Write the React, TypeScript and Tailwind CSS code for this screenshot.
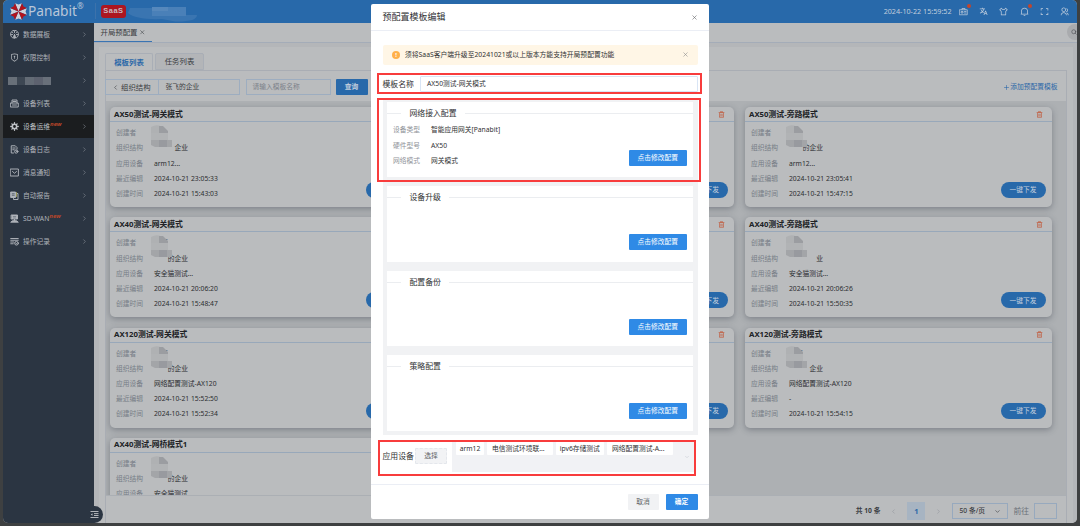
import React from "react";
import {
  RiTranslate2,
  RiTShirtLine,
  RiNotification2Line,
  RiFullscreenLine,
  RiGroupLine,
  RiShieldKeyholeLine,
  RiDeleteBin6Line,
} from "react-icons/ri";
import { ChevronRight, ChevronLeft, ChevronDown, X, Search, Plus } from "lucide-react";

type IconProps = { className?: string };

function Logo() {
  const wedge = "M0 0 L-3.7 -9.2 L0 -7.8 L3.7 -9.2 Z";
  return (
    <svg viewBox="-9.4 -9.4 18.8 18.8" className="size-[17px] shrink-0">
      {[0, 90, 180, 270].map((a) => (
        <path key={a} d={wedge} fill="#d0d2d8" transform={`rotate(${a})`} />
      ))}
      {[45, 135, 225, 315].map((a) => (
        <path key={a} d={wedge} fill="#b3141c" transform={`rotate(${a})`} />
      ))}
    </svg>
  );
}

function Glyph({ className, children }: IconProps & { children: React.ReactNode }) {
  return (
    <svg
      viewBox="0 0 18 18"
      className={className}
      fill="none"
      stroke="currentColor"
      strokeWidth="1.9"
      strokeLinecap="round"
      strokeLinejoin="round"
    >
      {children}
    </svg>
  );
}

const DashboardIcon = (p: IconProps) => (
  <Glyph {...p}>
    <path d="M5 15.6A8 8 0 1 1 13 15.6" />
    <path d="M9 2v3M3 9h2M13 9h2M5 5l1 1M13 5l-1 1M9 9v7M7 13l2-4 2 4v3H7z" />
  </Glyph>
);
const DevicesIcon = (p: IconProps) => (
  <Glyph {...p}>
    <path d="M4 8V2h10v6M1.500 8h15v8h-15zM6 5h6M5 12h8" />
  </Glyph>
);
const GearIcon = (p: IconProps) => (
  <Glyph {...p}>
    <circle cx="9" cy="9" r="4.300" strokeWidth="3" />
    <path
      strokeWidth="2.600"
      d="M9 1.500v2M9 14.500v2M1.500 9h2M14.500 9h2M3.700 3.700l1.400 1.400M12.900 12.900l1.400 1.400M3.700 14.300l1.400-1.400M12.900 5.100l1.400-1.400"
    />
  </Glyph>
);
const LogIcon = (p: IconProps) => (
  <Glyph {...p}>
    <path d="M7 16H2.500V1.500h8L14 5v3M5.500 6h5M5.500 9.500h3" />
    <circle cx="12.500" cy="13" r="3.300" />
    <path d="M12.500 11.500V13h1.500" />
  </Glyph>
);
const MailIcon = (p: IconProps) => (
  <Glyph {...p}>
    <path d="M1.200 2h15.600v14H1.200zM5 7l4 3.500L13 7" />
  </Glyph>
);
const ReportIcon = (p: IconProps) => (
  <Glyph {...p}>
    <path d="M2 2h9v11H2z" fill="currentColor" />
    <path d="M14 5h2v12H7v-2" />
    <path d="M4.500 5.500h4M4.500 8.500h4" stroke="#59636f" />
    <path d="M13 3v8" stroke="#9c9a5a" />
  </Glyph>
);
const WanIcon = (p: IconProps) => (
  <Glyph {...p}>
    <path d="M3 2h12v8H3zM9 10v3" fill="currentColor" />
    <path d="M2 16l3-2.500h8l3 2.500z" fill="currentColor" />
    <path d="M6.500 5h5M7 8h4" stroke="#59636f" strokeWidth="1.200" />
  </Glyph>
);
const RecordIcon = (p: IconProps) => (
  <Glyph {...p}>
    <path d="M1.500 3h15M1.500 6.500h15M1.500 10h6M1.500 13.500h5" />
    <circle cx="13" cy="12.500" r="3.700" />
    <path d="M11.500 12.500l1.200 1 2-2" />
  </Glyph>
);
const BadgeIcon = (p: IconProps) => (
  <Glyph {...p}>
    <path d="M1.500 5.500h15v10h-15zM6 5.500V3h6v2.500M5 9h3v3H5zM11 9h3M11 12h3" strokeWidth="1.500" />
  </Glyph>
);
const FoldIcon = (p: IconProps) => (
  <Glyph {...p}>
    <path d="M1 3h16M8 7.200h9M8 11h9M1 15h16" strokeLinecap="butt" />
    <path d="M5 6.500v5L1.500 9z" fill="currentColor" stroke="none" />
  </Glyph>
);

const menu: { label: string; icon?: React.ComponentType<IconProps>; isNew?: boolean; active?: boolean }[] = [
  { label: "数据展板", icon: DashboardIcon },
  { label: "权限控制", icon: RiShieldKeyholeLine },
  { label: "" },
  { label: "设备列表", icon: DevicesIcon },
  { label: "设备运维", icon: GearIcon, isNew: true, active: true },
  { label: "设备日志", icon: LogIcon },
  { label: "消息通知", icon: MailIcon },
  { label: "自动报告", icon: ReportIcon },
  { label: "SD-WAN", icon: WanIcon, isNew: true },
  { label: "操作记录", icon: RecordIcon },
];

function Sidebar() {
  return (
    <aside className="flex w-[91px] shrink-0 flex-col bg-[#2b3542] pt-[0.500px] text-[#b0b4ba]">
      {menu.map((m, i) => {
        const Icon = m.icon;
        return (
          <div
            key={i}
            className={
              "flex h-[23px] shrink-0 items-center pr-[6.500px] pl-[7px] " +
              (m.active ? "bg-[#1b1d1f] text-[#bfc2c6]" : "")
            }
          >
            {Icon ? (
              <>
                <Icon className="mr-[4px] size-[9px] shrink-0" />
                <span>{m.label}</span>
                {m.isNew && <span className="-mt-[4px] text-[6px] font-bold text-[#b8452a] italic">new</span>}
              </>
            ) : (
              <span className="-ml-[2px] flex h-[8px]">
                <i className="w-[9px] bg-[#687079]" />
                <i className="w-[8px] bg-[#3d4753]" />
                <i className="w-[9px] bg-[#636b75]" />
                <i className="w-[9px] bg-[#5d626f]" />
                <i className="w-[8px] bg-[#69707a]" />
              </span>
            )}
            <ChevronRight className="ml-auto size-[7px] text-[#8b9199]" />
          </div>
        );
      })}
    </aside>
  );
}

function Header() {
  return (
    <header className="flex h-[22.500px] shrink-0 items-center bg-[#2869aa] pl-[7px]">
      <Logo />
      <span className="ml-[1px] text-[13.700px] leading-[20px] text-[#b9c7d9]">Panabit</span>
      <span className="-mt-[11px] text-[8px] text-[#b9c7d9]">®</span>
      <span className="ml-[11px] h-[16px] w-px bg-[#3c72ab]" />
      <span className="ml-[5px] flex h-[13px] w-[25.500px] items-center justify-center rounded-[3px] bg-[#ad1620] font-['Liberation_Sans'] text-[7.500px] font-bold tracking-[0.500px] text-[#c9b9c0]">
        SaaS
      </span>
      <svg viewBox="0 0 70 22" className="mt-[3px] ml-[2px] h-[22px] w-[70px]">
        <path d="M2 6h56v7h11q0 7-22 6.500L34 17Q8 18 0 11z" fill="#3a75b1" />
        <path d="M24 5h34v9H24z" fill="#4a80b8" />
        <path d="M24 5h16v4H24z" fill="#5688bc" />
      </svg>
      <span className="ml-auto text-[7.200px] text-[#c0cddc]">2024-10-22 15:59:52</span>
      <div className="mr-[8px] ml-[7.500px] flex items-center gap-[11.200px] text-[#bccbdc]">
        <span className="relative">
          <BadgeIcon className="size-[9px]" />
          <i className="absolute -top-[3px] -right-[3px] size-[4px] rounded-full bg-[#c2452c]" />
        </span>
        <RiTranslate2 className="size-[9px]" />
        <RiTShirtLine className="size-[9px]" />
        <span className="relative">
          <RiNotification2Line className="size-[9px]" />
          <i className="absolute -top-[3px] -right-[3px] size-[4px] rounded-full bg-[#c2452c]" />
        </span>
        <RiFullscreenLine className="size-[9px]" />
        <RiGroupLine className="size-[9px]" />
      </div>
    </header>
  );
}

type Template = {
  title: string;
  org: string;
  device: string;
  edited?: string;
  created?: string;
  name?: string;
};

const left: Template[] = [
  { title: "AX50测试-网关模式", org: "企业", device: "arm12...", edited: "2024-10-21 23:05:33", created: "2024-10-21 15:43:03" },
  { title: "AX40测试-网关模式", org: "的企业", name: "蓓", device: "安全猫测试...", edited: "2024-10-21 20:06:20", created: "2024-10-21 15:48:47" },
  { title: "AX120测试-网关模式", org: "的企业", name: "蓓", device: "网络配置测试-AX120", edited: "2024-10-21 15:52:50", created: "2024-10-21 15:52:34" },
  { title: "AX40测试-网桥模式1", org: "的企业", device: "安全猫测试" },
];
const middle: (Template | null)[] = [null, null, null];
const right: Template[] = [
  { title: "AX50测试-旁路模式", org: "的企业", device: "arm12...", edited: "2024-10-21 23:05:41", created: "2024-10-21 15:47:15" },
  { title: "AX40测试-旁路模式", org: "业", device: "安全猫测试...", edited: "2024-10-21 20:06:26", created: "2024-10-21 15:50:35" },
  { title: "AX120测试-旁路模式", org: "企业", name: "蓓", device: "网络配置测试-AX120", edited: "-", created: "2024-10-21 15:54:15" },
];

function Row({ label, children }: { label: string; children?: React.ReactNode }) {
  return (
    <div className="flex h-[15.200px] items-center">
      <span className="w-[38px] shrink-0 text-[#767c86]">{label}</span>
      <span className="whitespace-nowrap">{children}</span>
    </div>
  );
}

function Mask() {
  return (
    <svg viewBox="0 0 30 28" className="absolute top-[2px] left-[41px] h-[28px] w-[30px]">
      <path d="M0 3q9-5 17 5v5H0z" fill="#afb1b3" />
      <path d="M8 2h4l5 5v3H8z" fill="#9b9da1" />
      <path d="M0 9h17v7H0z" fill="#b1b3b5" />
      <path d="M0 16h21v7H4L0 21z" fill="#a3a5a8" />
      <path d="M8 16h8v7H8z" fill="#989a9f" />
    </svg>
  );
}

function Card({ t }: { t: Template | null }) {
  return (
    <section className="flex h-[100px] w-[307px] shrink-0 flex-col rounded-[5px] bg-[#babcbe] text-[#2a2c30] shadow-[0_2px_6px_rgba(40,45,60,0.35)]">
      <div className="flex h-[15px] shrink-0 items-center justify-between border-b border-[#98a8ba] pr-[9px] pl-[4.500px]">
        <h3 className="text-[7.800px] font-bold text-[#202225]">{t?.title}</h3>
        <RiDeleteBin6Line className="size-[7px] text-[#c2502f]" />
      </div>
      <div className="relative flex-1 pt-[3.300px] pl-[6.500px]">
        {t && (
          <>
            <Row label="创建者">
              <span className="ml-[7px]">{t.name}</span>
            </Row>
            <Row label="组织结构">
              <span className="flex w-[34px] justify-end">{t.org}</span>
            </Row>
            <Row label="应用设备">{t.device}</Row>
            {t.edited && <Row label="最近编辑">{t.edited}</Row>}
            {t.created && <Row label="创建时间">{t.created}</Row>}
            <Mask />
          </>
        )}
        {(!t || t.created) && (
          <button className="absolute right-[6px] bottom-[9px] h-[16px] w-[45px] rounded-full bg-[#2869aa] text-[#c3cfdd]">
            一键下发
          </button>
        )}
      </div>
    </section>
  );
}

function Column({ items }: { items: (Template | null)[] }) {
  return (
    <div className="flex flex-col gap-[10.250px]">
      {items.map((t, i) => (
        <Card key={i} t={t} />
      ))}
    </div>
  );
}

function Page() {
  return (
    <main className="flex min-w-0 flex-1 flex-col bg-[#b4b6b9] text-[#3a3d42]">
      <div className="flex h-[20.500px] shrink-0 items-stretch justify-between border-b border-[#a4acb8] bg-[#babcbe]">
        <div className="flex w-[57.500px] items-center border-b border-[#3a74b2] pl-[6.500px] text-[7.400px]">
          开局预配置
          <X className="ml-[2px] size-[6.500px]" />
        </div>
        <span className="mt-[1px] -mr-[6px] flex size-[16px] items-center rounded-full bg-[#a9abae] pl-[4px]">
          <Search className="size-[6px]" />
        </span>
      </div>
      <div className="mr-[4.500px] ml-[5px] mt-[4px] flex min-h-0 flex-1 flex-col bg-[#babcbe] pt-[6px] pl-[6px]">
        <div className="flex h-[17px] shrink-0 gap-[2px] text-[7.400px]">
          <span className="flex w-[48px] items-center justify-center rounded-t-[2px] border-x border-t border-[#a9aeb6] font-bold text-[#2b68a8]">
            模板列表
          </span>
          <span className="flex w-[49px] items-center justify-center rounded-t-[2px] border border-[#a9aeb6] bg-[#b3b5b8]">
            任务列表
          </span>
        </div>
        <div className="mr-[6px] flex min-h-0 flex-1 flex-col border-x border-t border-[#a9adb4]">
          <div className="-ml-px flex h-[30px] shrink-0 items-center pt-[2px]">
            <div className="flex h-[16px] w-[135px] border border-[#9dadc0]">
              <span className="flex w-[53px] items-center border-r border-[#9dadc0] pl-[6px] text-[7.400px]">
                <ChevronLeft className="mr-[2px] size-[7px]" />
                组织结构
              </span>
              <span className="flex items-center pl-[6.500px]">张飞的企业</span>
            </div>
            <div className="ml-[5.500px] flex h-[16px] w-[85px] items-center border border-[#9dadc0] pl-[6px] text-[#7d828a]">
              请输入模板名称
            </div>
            <button className="ml-[5px] h-[16px] w-[32px] rounded-[1px] bg-[#2869aa] font-bold text-[#c3cfdd]">查询</button>
            <span className="mr-[8px] ml-auto flex items-center text-[#2b68a8]">
              <Plus className="size-[7px]" />
              添加预配置模板
            </span>
          </div>
          <div className="flex min-h-0 flex-1 gap-[10.500px] overflow-hidden bg-[#adb0b3] pt-[6px] pl-[3.500px]">
            <Column items={left} />
            <Column items={middle} />
            <Column items={right} />
          </div>
          <div className="flex h-[28px] shrink-0 items-center justify-end border-t border-[#abafb4] pt-[3px] pr-[8.500px]">
            <span className="font-bold">共 10 条</span>
            <ChevronLeft className="ml-[10px] size-[7px] text-[#92969c]" />
            <span className="ml-[10px] flex h-[18px] w-[18px] items-center justify-center bg-[#a7b4c2] text-[7.500px] font-bold text-[#2b68a8]">
              1
            </span>
            <ChevronRight className="ml-[10px] size-[7px] text-[#92969c]" />
            <span className="ml-[10px] flex h-[16px] w-[56px] items-center justify-between border border-[#97a9be] pr-[6px] pl-[6px] font-medium">
              50 条/页
              <ChevronDown className="size-[7px]" />
            </span>
            <span className="ml-[5px] text-[7.800px] text-[#6c7179]">前往</span>
            <span className="ml-[5px] h-[16px] w-[23px] border border-[#97a9be]" />
          </div>
        </div>
      </div>
    </main>
  );
}

function ConfigSection({ title, children }: { title: string; children?: React.ReactNode }) {
  return (
    <section className="relative h-[75.500px] shrink-0 bg-white pt-[5px]">
      <div className="flex h-[13px] items-center">
        <i className="h-px w-[14px] bg-[#ebedf0]" />
        <h4 className="mx-[8.500px] text-[7.850px] text-[#303133]">{title}</h4>
        <i className="h-px flex-1 bg-[#ebedf0]" />
      </div>
      <div className="pt-[3px] pl-[6px]">{children}</div>
      <button className="absolute right-[6px] bottom-[11.500px] h-[16px] w-[58.500px] rounded-[1px] bg-[#2f8ae6] text-white">
        点击修改配置
      </button>
    </section>
  );
}

function Field({ label, value }: { label: string; value: string }) {
  return (
    <div className="flex h-[15.200px] items-center">
      <span className="w-[38px] text-[#909399]">{label}</span>
      <span className="text-[#303133]">{value}</span>
    </div>
  );
}

const tags = [
  { text: "arm12", width: "w-[28px]" },
  { text: "电信测试环境联...", width: "w-[65.500px] pr-[3px]" },
  { text: "ipv6存储测试", width: "w-[48.500px]" },
  { text: "网络配置测试-A...", width: "w-[65.500px] pr-[3px]" },
];

function Dialog() {
  return (
    <div className="absolute top-[4px] left-[371px] flex h-[514.500px] w-[337.500px] flex-col rounded-[2px] bg-white text-[#303133]">
      <div className="flex h-[27px] shrink-0 items-center justify-between border-b border-[#ebeef5] pr-[11px] pl-[11.500px]">
        <h2 className="text-[9px]">预配置模板编辑</h2>
        <X className="size-[7px] text-[#606266]" />
      </div>
      <div className="mr-[11px] ml-[11.500px] flex flex-col">
        <div className="mt-[13.500px] flex h-[20.500px] items-center rounded-[2px] bg-[#fff6e6] pr-[9px] pl-[9.500px]">
          <span className="mr-[5px] flex size-[8px] items-center justify-center rounded-full bg-[#ffb04a] text-[6px] font-bold text-white">
            !
          </span>
          <span className="text-[6.800px] whitespace-nowrap">须将SaaS客户端升级至20241021或以上版本方能支持开局预配置功能</span>
          <X className="ml-auto size-[7px] text-[#8c8c8c]" />
        </div>
        <div className="mt-[11px] flex h-[16px] items-center">
          <span className="w-[37px] text-[7.850px]">模板名称</span>
          <span className="flex h-[16px] flex-1 items-center rounded-[1px] border border-[#d9e5f5] pl-[6.500px]">AX50测试-网关模式</span>
        </div>
        <div className="mt-[6px] flex flex-col gap-[9px] bg-[#f1f2f4] px-[4.500px] pt-[3.500px] pb-[4.500px]">
          <ConfigSection title="网络接入配置">
            <Field label="设备类型" value="智能应用网关[Panabit]" />
            <Field label="硬件型号" value="AX50" />
            <Field label="网络模式" value="网关模式" />
          </ConfigSection>
          <ConfigSection title="设备升级" />
          <ConfigSection title="配置备份" />
          <ConfigSection title="策略配置" />
        </div>
        <div className="mt-[6.500px] flex h-[30px] items-start">
          <span className="mt-[7px] w-[32.500px] text-[7.850px] leading-[14px] whitespace-nowrap">应用设备</span>
          <button className="mt-[6px] h-[16px] w-[32px] rounded-[1px] border border-dashed border-[#e4e7ec] bg-[#f2f3f5] text-[#606266]">
            选择
          </button>
          <div className="ml-[5px] flex h-[30px] w-[242px] items-start gap-[3px] bg-[#f1f2f5] pl-[4px]">
            {tags.map((t) => (
              <span
                key={t.text}
                className={"flex h-[13.500px] items-center justify-center rounded-[1px] bg-white whitespace-nowrap " + t.width}
              >
                {t.text}
              </span>
            ))}
            <ChevronDown className="mt-[12px] ml-auto mr-[4px] size-[6px] text-[#c0c4cc]" />
          </div>
        </div>
      </div>
      <div className="mt-auto flex h-[34.500px] shrink-0 items-center justify-end gap-[7px] border-t border-[#ebeef5] pr-[11px]">
        <button className="h-[16px] w-[31px] rounded-[1px] bg-[#f1f2f4] text-[#606266]">取消</button>
        <button className="h-[16px] w-[32px] rounded-[1px] bg-[#2f8ae6] font-bold text-white">确定</button>
      </div>
    </div>
  );
}

export default function App() {
  return (
    <div className="relative h-[526px] w-[1080px] overflow-hidden bg-[#3e4041] pr-[3px] pl-[3px] font-['Noto_Sans','Noto_Sans_CJK_SC',sans-serif] text-[6.750px] leading-[1.4]">
      <div className="flex h-[523px] flex-col overflow-hidden rounded-[5px] bg-[#b4b6b9]">
        <Header />
        <div className="flex min-h-0 flex-1">
          <Sidebar />
          <Page />
        </div>
      </div>
      <div className="absolute top-[506px] left-[84px] flex h-[17px] w-[19px] items-center rounded-r-full bg-[#2b3542] pl-[6px] text-[#b9bcc0]">
        <FoldIcon className="size-[9px]" />
      </div>
      <Dialog />
      <div className="absolute top-[73px] left-[377px] h-[21px] w-[325px] border-2 border-[#f83c3c]" />
      <div className="absolute top-[98px] left-[377px] h-[84px] w-[324px] border-2 border-[#f83c3c]" />
      <div className="absolute top-[440px] left-[378px] h-[36px] w-[318px] border-2 border-[#f83c3c]" />
    </div>
  );
}
